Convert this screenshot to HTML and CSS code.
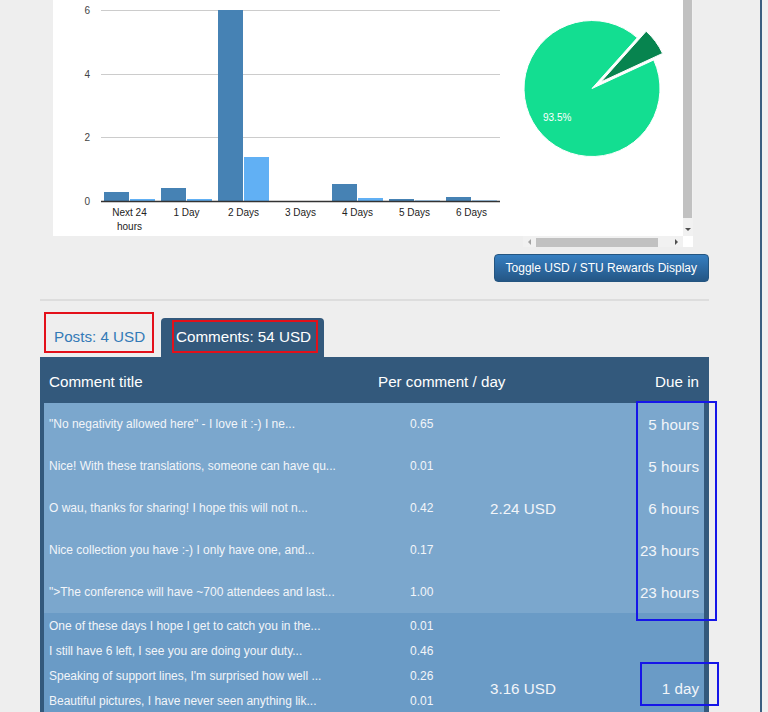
FILE: index.html
```html
<!DOCTYPE html>
<html lang="en">
<head>
<meta charset="utf-8">
<title>Rewards</title>
<link rel="stylesheet" href="styles.css">
</head>
<body>
<div class="page">
  <main class="main">
    <div class="charts">
      <div class="bar-chart">
        <svg class="bar-svg" width="470" height="236" viewBox="0 0 470 236">
          <g class="grid">
            <line x1="48" y1="10.5" x2="447" y2="10.5"/>
            <line x1="48" y1="74.5" x2="447" y2="74.5"/>
            <line x1="48" y1="137.5" x2="447" y2="137.5"/>
          </g>
          <g class="ylabels">
            <text x="37" y="13.5">6</text>
            <text x="37" y="77.5">4</text>
            <text x="37" y="141">2</text>
            <text x="37" y="205">0</text>
          </g>
          <g class="dark">
            <rect x="51" y="192" width="25" height="9.5"/>
            <rect x="108" y="188" width="25" height="13.5"/>
            <rect x="165" y="10" width="25" height="191.5"/>
            <rect x="279" y="184" width="25" height="17.5"/>
            <rect x="336" y="199" width="25" height="2.5"/>
            <rect x="393" y="197" width="25" height="4.5"/>
          </g>
          <g class="light">
            <rect x="77" y="199" width="25" height="2.5"/>
            <rect x="134" y="199" width="25" height="2.5"/>
            <rect x="191" y="157" width="25" height="44.5"/>
            <rect x="305" y="198" width="25" height="3.5"/>
            <rect x="362" y="200.5" width="25" height="1"/>
            <rect x="419" y="200.5" width="25" height="1"/>
          </g>
          <line class="axis" x1="48" y1="201.5" x2="447" y2="201.5"/>
          <g class="xlabels">
            <text x="76.5" y="216">Next 24</text>
            <text x="76.5" y="229.5">hours</text>
            <text x="133.5" y="216">1 Day</text>
            <text x="190.5" y="216">2 Days</text>
            <text x="247.5" y="216">3 Days</text>
            <text x="304.5" y="216">4 Days</text>
            <text x="361.5" y="216">5 Days</text>
            <text x="418.5" y="216">6 Days</text>
          </g>
        </svg>
      </div>
      <div class="pie-box">
        <div class="pie-view">
          <svg width="160" height="236" viewBox="0 0 160 236">
            <path class="pie-main" d="M69,88.5 L114.32,37.81 A68,68 0 1 0 130.73,59.97 Z"/>
            <path class="pie-slice" d="M77.84,81.96 L139.57,53.43 A68,68 0 0 0 123.16,31.27 Z"/>
            <text class="pie-label" x="20" y="121">93.5%</text>
          </svg>
        </div>
        <div class="vscroll">
          <div class="vthumb"></div>
          <div class="varrow"><span class="tri-down"></span></div>
        </div>
        <div class="hscroll">
          <div class="harrow"><span class="tri-left"></span></div>
          <div class="hthumb"></div>
          <div class="hspace"></div>
          <div class="harrow"><span class="tri-right"></span></div>
        </div>
        <div class="corner"></div>
      </div>
    </div>

    <div class="toggle-row">
      <button class="btn">Toggle USD / STU Rewards Display</button>
    </div>

    <hr class="divider">

    <ul class="tabs">
      <li class="tab tab-posts"><span class="tab-link">Posts: 4 USD</span><span class="mark mark-posts"></span></li>
      <li class="tab tab-active"><span class="tab-link">Comments: 54 USD</span><span class="mark mark-comments"></span></li>
    </ul>

    <div class="panel">
      <table class="rewards">
        <colgroup>
          <col class="c-title"><col class="c-per"><col class="c-total"><col class="c-due">
        </colgroup>
        <thead>
          <tr>
            <th class="h-title">Comment title</th>
            <th class="h-per" colspan="2">Per comment / day</th>
            <th class="h-due">Due in</th>
          </tr>
        </thead>
        <tbody class="g1">
          <tr>
            <td class="t">"No negativity allowed here" - I love it :-) I ne...</td>
            <td class="v">0.65</td>
            <td class="sum" rowspan="5">2.24 USD</td>
            <td class="due">5 hours</td>
          </tr>
          <tr>
            <td class="t">Nice! With these translations, someone can have qu...</td>
            <td class="v">0.01</td>
            <td class="due">5 hours</td>
          </tr>
          <tr>
            <td class="t">O wau, thanks for sharing! I hope this will not n...</td>
            <td class="v">0.42</td>
            <td class="due">6 hours</td>
          </tr>
          <tr>
            <td class="t">Nice collection you have :-) I only have one, and...</td>
            <td class="v">0.17</td>
            <td class="due">23 hours</td>
          </tr>
          <tr>
            <td class="t">"&gt;The conference will have ~700 attendees and last...</td>
            <td class="v">1.00</td>
            <td class="due">23 hours</td>
          </tr>
        </tbody>
        <tbody class="g2">
          <tr>
            <td class="t">One of these days I hope I get to catch you in the...</td>
            <td class="v">0.01</td>
            <td class="sum" rowspan="6">3.16 USD</td>
            <td class="due" rowspan="6">1 day</td>
          </tr>
          <tr>
            <td class="t">I still have 6 left, I see you are doing your duty...</td>
            <td class="v">0.46</td>
          </tr>
          <tr>
            <td class="t">Speaking of support lines, I'm surprised how well ...</td>
            <td class="v">0.26</td>
          </tr>
          <tr>
            <td class="t">Beautiful pictures, I have never seen anything lik...</td>
            <td class="v">0.01</td>
          </tr>
          <tr class="spacer-row">
            <td class="t"></td>
            <td class="v"></td>
          </tr>
          <tr class="spacer-row">
            <td class="t"></td>
            <td class="v"></td>
          </tr>
        </tbody>
      </table>
      <span class="mark-blue mark-due1"></span>
      <span class="mark-blue mark-due2"></span>
    </div>
  </main>
  <div class="rail"></div>
  <div class="edge"></div>
</div>
</body>
</html>
```

FILE: styles.css
```css
html, body {
  margin: 0;
  padding: 0;
  height: 712px;
  overflow: hidden;
  background: #eeeeee;
  font-family: "Liberation Sans", Arial, sans-serif;
}

.page {
  display: flex;
  height: 712px;
  overflow: hidden;
}

.main {
  position: relative;
  width: 760px;
  flex: none;
  box-sizing: border-box;
  padding-left: 40px;
  padding-right: 51px;
}

.rail {
  width: 2px;
  flex: none;
  background: #3b5f81;
}

.edge {
  flex: 1;
  background: #f0f0f0;
}

/* charts */
.charts {
  display: flex;
  align-items: flex-start;
  margin-left: 13px;
  height: 247px;
}

.bar-chart {
  width: 470px;
  height: 236px;
  background: #ffffff;
}

.bar-svg {
  display: block;
}

.grid line {
  stroke: #cccccc;
  stroke-width: 1;
}

.ylabels text {
  font-family: "Liberation Sans", Arial, sans-serif;
  font-size: 10px;
  fill: #444444;
  text-anchor: end;
}

.xlabels text {
  font-family: "Liberation Sans", Arial, sans-serif;
  font-size: 10px;
  fill: #222222;
  text-anchor: middle;
}

.dark rect {
  fill: #4682b4;
}

.light rect {
  fill: #61b0f4;
}

.axis {
  stroke: #333333;
  stroke-width: 1.5;
}

.pie-box {
  display: grid;
  grid-template-columns: 160px 10px;
  grid-template-rows: 236px 11px;
  width: 170px;
}

.pie-view {
  background: #ffffff;
  overflow: hidden;
}

.pie-view svg {
  display: block;
}

.pie-main {
  fill: #13de91;
  stroke: #ffffff;
  stroke-width: 1;
}

.pie-slice {
  fill: #07844f;
  stroke: #ffffff;
  stroke-width: 1;
}

.pie-label {
  font-family: "Liberation Sans", Arial, sans-serif;
  font-size: 10px;
  fill: #ffffff;
}

.vscroll {
  background: #f1f1f1;
  display: flex;
  flex-direction: column;
}

.vthumb {
  height: 218px;
  background: #c1c1c1;
  margin-right: 1px;
}

.varrow {
  margin-top: auto;
  height: 13px;
  display: flex;
  align-items: center;
  justify-content: center;
}

.tri-down {
  width: 0;
  height: 0;
  border-left: 3px solid transparent;
  border-right: 3px solid transparent;
  border-top: 3px solid #505050;
}

.hscroll {
  background: #f1f1f1;
  display: flex;
  align-items: stretch;
}

.harrow {
  width: 13px;
  flex: none;
  display: flex;
  align-items: center;
  justify-content: center;
}

.tri-left {
  width: 0;
  height: 0;
  border-top: 3px solid transparent;
  border-bottom: 3px solid transparent;
  border-right: 3px solid #a3a3a3;
}

.tri-right {
  width: 0;
  height: 0;
  border-top: 3px solid transparent;
  border-bottom: 3px solid transparent;
  border-left: 3px solid #505050;
}

.hthumb {
  width: 122px;
  flex: none;
  margin-top: 2px;
  background: #c1c1c1;
}

.hspace {
  flex: 1;
}

.corner {
  background: #ffffff;
}

/* toggle */
.toggle-row {
  display: flex;
  justify-content: flex-end;
  margin-top: 7px;
}

.btn {
  height: 28px;
  padding: 0 11px;
  font-family: "Liberation Sans", Arial, sans-serif;
  font-size: 12px;
  color: #ffffff;
  border: 1px solid #245580;
  border-radius: 4px;
  background: linear-gradient(#367ec0, #245685);
}

.divider {
  margin: 17px 0 0;
  border: 0;
  height: 2px;
  background: #dddddd;
}

/* tabs */
.tabs {
  display: flex;
  list-style: none;
  margin: 17px 0 0;
  padding: 0;
}

.tab {
  position: relative;
  box-sizing: border-box;
  height: 39px;
  line-height: 38px;
  font-size: 15.2px;
  white-space: nowrap;
  border-radius: 4px 4px 0 0;
}

.tab-posts {
  width: 119px;
  padding-left: 14px;
  margin-right: 2px;
  color: #337ab7;
}

.tab-active {
  width: 163px;
  padding-left: 15px;
  background: #33597c;
  color: #ffffff;
}

.mark {
  position: absolute;
  border: 2px solid #e3101a;
  box-sizing: border-box;
}

.mark-posts {
  left: 4px;
  top: -6px;
  width: 110px;
  height: 41px;
}

.mark-comments {
  left: 11px;
  top: 2px;
  width: 146px;
  height: 33px;
}

/* panel */
.panel {
  position: relative;
  background: #33597c;
  padding: 0 5px 0 4px;
}

.rewards {
  width: 660px;
  table-layout: fixed;
  border-collapse: collapse;
  border-spacing: 0;
  color: #f2f5f9;
}

.c-title { width: 334px; }
.c-per { width: 100px; }
.c-total { width: 142px; }
.c-due { width: 84px; }

.rewards th {
  height: 43px;
  padding: 3px 0 0;
  font-size: 15.2px;
  font-weight: normal;
  color: #ffffff;
  text-align: left;
  white-space: nowrap;
}

.rewards th.h-title {
  padding-left: 5px;
}

.rewards th.h-due {
  text-align: right;
  padding-right: 5px;
}

.rewards td {
  padding: 0;
  vertical-align: middle;
  white-space: nowrap;
  overflow: hidden;
}

.g1 td {
  height: 42px;
  background: #7ba7cd;
}

.g2 td {
  height: 25.25px;
  background: #6a9bc6;
}

.t {
  padding-left: 5px !important;
  font-size: 12px;
}

.v {
  padding-left: 32px !important;
  font-size: 12px;
}

.sum {
  padding-left: 12px !important;
  font-size: 15.2px;
}

.due {
  text-align: right;
  padding-right: 5px !important;
  font-size: 15.2px;
}

.mark-blue {
  position: absolute;
  border: 2px solid #1616e8;
  box-sizing: border-box;
}

.mark-due1 {
  left: 596px;
  top: 44px;
  width: 81px;
  height: 220px;
}

.mark-due2 {
  left: 600px;
  top: 305px;
  width: 79px;
  height: 44px;
}
```
